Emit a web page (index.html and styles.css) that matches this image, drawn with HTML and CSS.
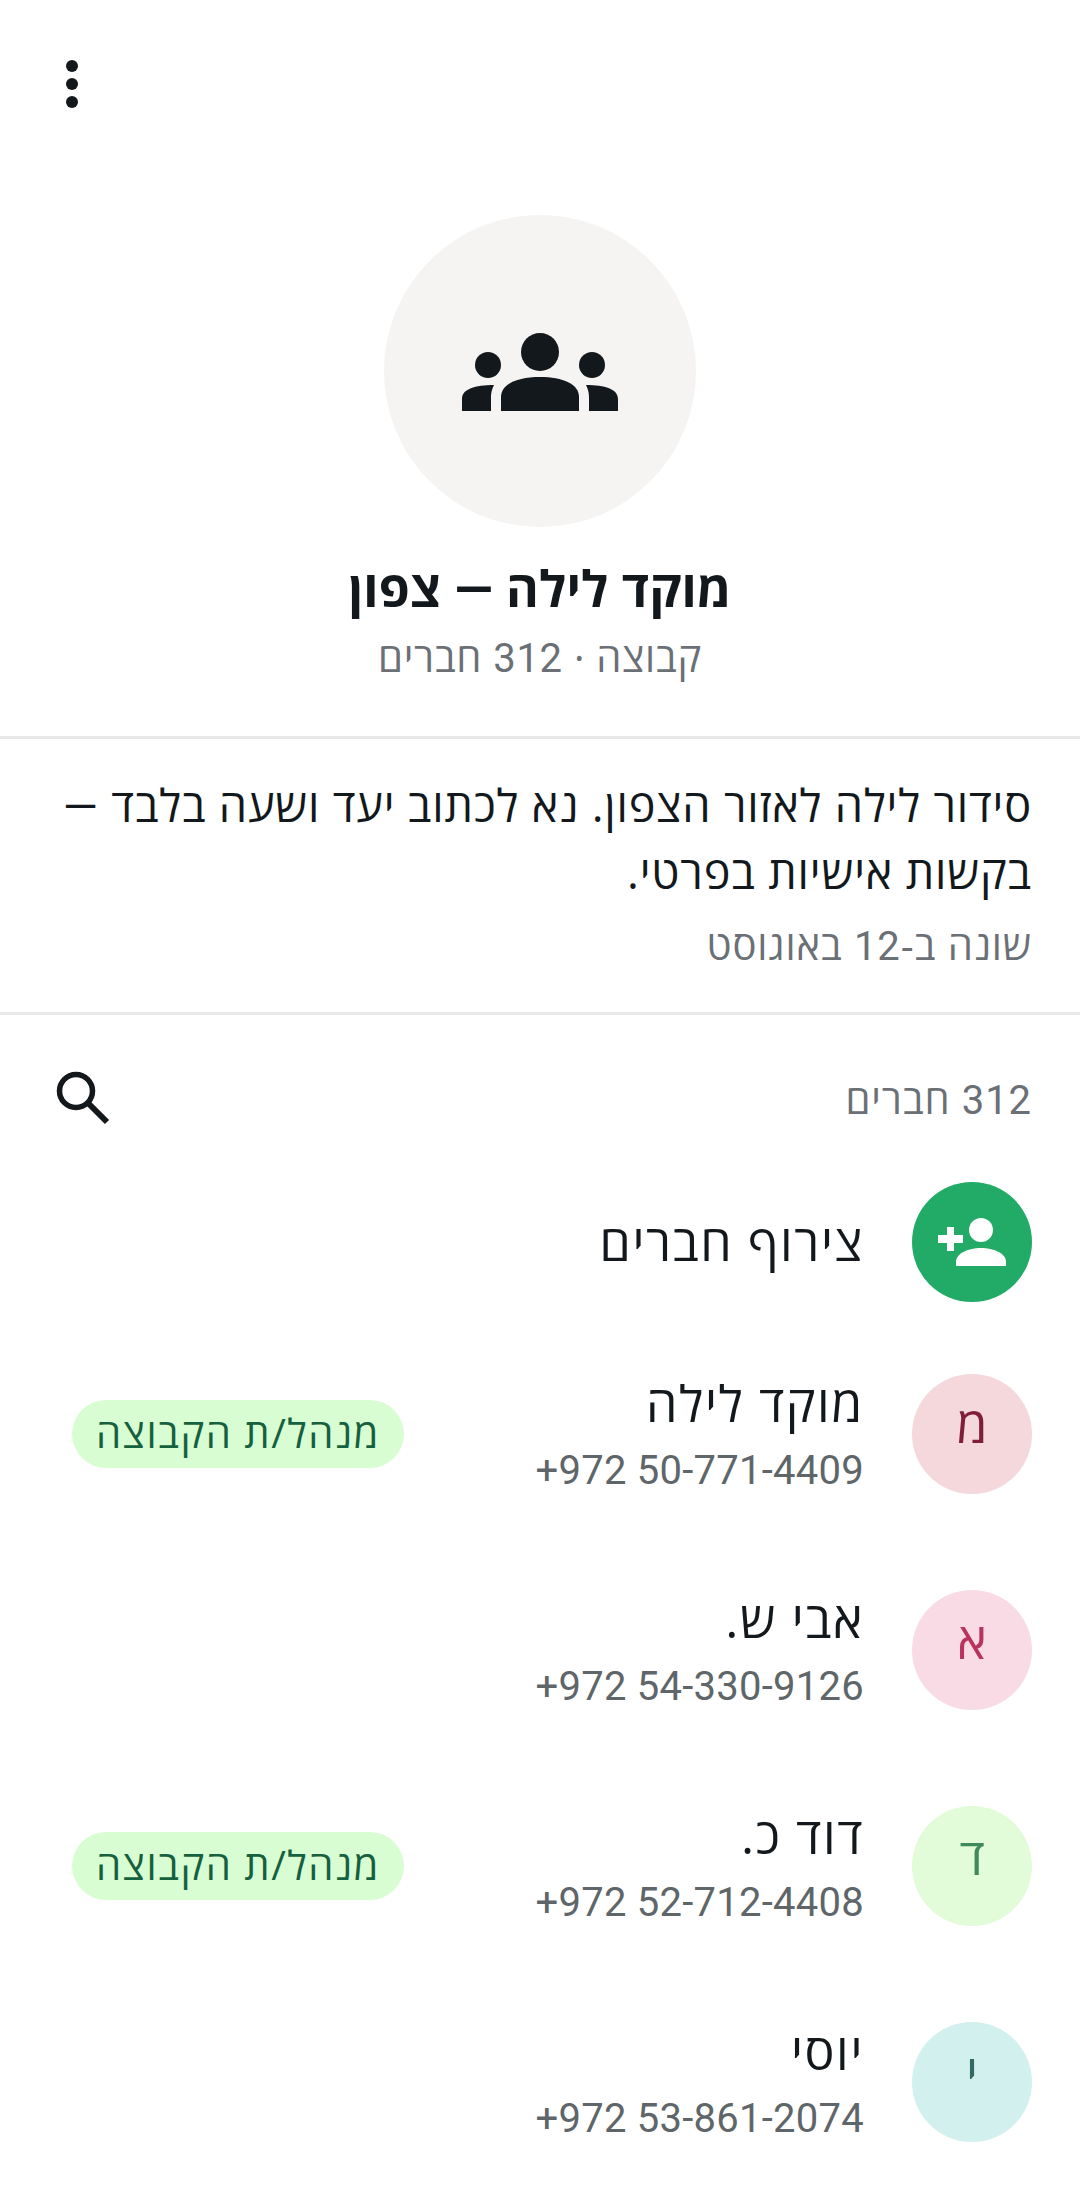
FILE: index.html
```html
<!DOCTYPE html>
<html lang="he" dir="rtl">
<head>
  <meta charset="UTF-8" />
  <meta name="viewport" content="width=device-width, initial-scale=1.0"/>
  <title>מוקד לילה — צפון</title>
  <link rel="stylesheet" href="styles.css">
</head>
<body>
  <div class="topbar">
    <svg class="kebab" width="12" height="48" viewBox="0 0 12 48"><circle cx="6" cy="6" r="6"/><circle cx="6" cy="24" r="6"/><circle cx="6" cy="42" r="6"/></svg>
  </div>

  <div class="profile">
    <div class="group-avatar">
      <svg width="156" height="78" viewBox="0 0 156 78">
        <circle cx="78" cy="19" r="19"/>
        <circle cx="26" cy="32" r="13"/>
        <circle cx="130" cy="32" r="13"/>
        <path d="M39 78V64C39 51 55 44 78 44S117 51 117 64V78Z"/>
        <path d="M0 78V66C0 56 13 52 32 52C29 58 29 62 29 66V78Z"/>
        <path d="M156 78V66C156 56 143 52 124 52C127 58 127 62 127 66V78Z"/>
      </svg>
    </div>
    <h1 class="group-name">מוקד לילה <span class="num">—</span> צפון</h1>
    <div class="group-meta">קבוצה · <span class="num">312</span> חברים</div>
  </div>

  <div class="about">
    <p>סידור לילה לאזור הצפון. נא לכתוב יעד ושעה בלבד <span class="num">—</span> בקשות אישיות בפרטי.</p>
    <div class="changed">שונה ב-<span class="num">12</span> באוגוסט</div>
  </div>

  <div class="members">
    <div class="members-head">
      <span><span class="num">312</span> חברים</span>
      <svg class="search" width="56" height="56" viewBox="0 0 56 56" fill="none" stroke="#12181c"><circle cx="22" cy="22" r="16.5" stroke-width="5.5"/><path d="M34.5 34.5L53 53" stroke-width="6"/></svg>
    </div>

    <div class="row join">
      <div class="avatar green">
        <svg width="68" height="48" viewBox="0 0 68 48" fill="#fff">
          <circle cx="43" cy="12" r="12"/>
          <path d="M18 48V44C18 35 31 30 43 30S68 35 68 44V48Z"/>
          <path d="M9 9H16V17H25V25H16V33H9V25H0V17H9Z"/>
        </svg>
      </div>
      <div class="name">צירוף חברים</div>
    </div>

    <div class="row member">
      <div class="avatar red">מ</div>
      <div class="info">
        <div class="name">מוקד לילה</div>
        <div class="phone" dir="ltr">+972 50-771-4409</div>
      </div>
      <span class="pill">מנהל/ת הקבוצה</span>
    </div>

    <div class="row member">
      <div class="avatar pink">א</div>
      <div class="info">
        <div class="name">אבי ש.</div>
        <div class="phone" dir="ltr">+972 54-330-9126</div>
      </div>
    </div>

    <div class="row member">
      <div class="avatar lime">ד</div>
      <div class="info">
        <div class="name">דוד כ.</div>
        <div class="phone" dir="ltr">+972 52-712-4408</div>
      </div>
      <span class="pill">מנהל/ת הקבוצה</span>
    </div>

    <div class="row member">
      <div class="avatar teal">י</div>
      <div class="info">
        <div class="name">יוסי</div>
        <div class="phone" dir="ltr">+972 53-861-2074</div>
      </div>
    </div>
  </div>
</body>
</html>
```

FILE: styles.css
```css
html, body {
  height: 2208px;
  overflow: hidden;
}

body {
  margin: 0;
  background: #fff;
  color: #12181c;
  font-family: "Open Sans", "Liberation Sans", sans-serif;
}

.num {
  font-family: Roboto, sans-serif;
}

.topbar {
  height: 215px;
  box-sizing: border-box;
  padding: 60px 66px 0;
  display: flex;
  justify-content: flex-end;
  align-items: flex-start;
}

.kebab {
  fill: #12181c;
}

.profile {
  height: 521px;
  box-sizing: border-box;
  display: flex;
  flex-direction: column;
  align-items: center;
}

.group-avatar {
  width: 312px;
  height: 312px;
  border-radius: 50%;
  background: #f5f4f2;
  display: flex;
  align-items: center;
  justify-content: center;
  fill: #12181c;
}

.group-avatar svg {
  margin-top: 2px;
}

.group-name {
  margin: 31px 0 0;
  font-size: 50px;
  line-height: 60px;
  font-weight: 700;
  letter-spacing: 0.2px;
}

.group-meta {
  margin-top: 12px;
  font-size: 40px;
  line-height: 50px;
  letter-spacing: 0.7px;
  color: #6a7075;
}

.about {
  height: 279px;
  box-sizing: border-box;
  border-top: 3px solid #e8e8e8;
  border-bottom: 3px solid #e8e8e8;
  padding: 33px 48px 0;
}

.about p {
  margin: 0;
  font-size: 45px;
  line-height: 65px;
  letter-spacing: 0.85px;
}

.changed {
  margin-top: 16px;
  font-size: 40px;
  line-height: 50px;
  letter-spacing: 0.9px;
  color: #6a7075;
}

.members-head {
  height: 167px;
  box-sizing: border-box;
  padding: 0 48px 0 54px;
  display: flex;
  justify-content: space-between;
  align-items: center;
  font-size: 40px;
  letter-spacing: 0.9px;
  color: #6a7075;
}

.search {
  margin-bottom: 4px;
}

.row {
  display: flex;
  align-items: center;
  padding: 0 48px 0 72px;
  gap: 48px;
}

.join {
  height: 120px;
  margin-bottom: 24px;
}

.member {
  height: 216px;
}

.avatar {
  width: 120px;
  height: 120px;
  box-sizing: border-box;
  padding-bottom: 20px;
  flex: none;
  border-radius: 50%;
  display: flex;
  align-items: center;
  justify-content: center;
  font-size: 50px;
}

.green { background: #21ab66; padding-bottom: 0; }
.red { background: #f4d8dc; color: #7f1d3a; }
.pink { background: #f9dbe6; color: #b8345f; }
.lime { background: #e2fbd8; color: #3f8a5c; }
.teal { background: #d2f0ed; color: #2f6b63; }

.info {
  flex: 1;
}

.name {
  font-size: 50px;
  line-height: 60px;
  letter-spacing: 1.6px;
}

.phone {
  margin-top: 13px;
  font-family: Roboto, sans-serif;
  font-size: 40px;
  line-height: 50px;
  letter-spacing: 0.25px;
  color: #5f6669;
  text-align: right;
}

.pill {
  height: 68px;
  box-sizing: border-box;
  padding: 0 24px;
  border-radius: 34px;
  background: #d9fdd3;
  color: #15603e;
  font-size: 40px;
  line-height: 66px;
  letter-spacing: 1.5px;
}
```
